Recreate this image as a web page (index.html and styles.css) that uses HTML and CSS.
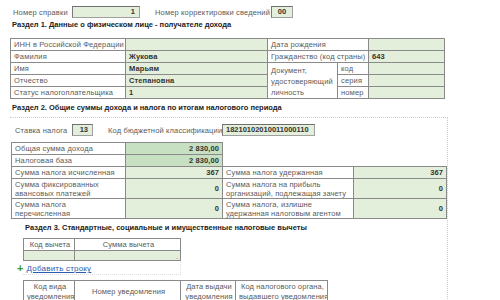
FILE: index.html
```html
<!DOCTYPE html>
<html lang="ru">
  <head>
    <meta charset="UTF-8" />
    <title>Справка 2-НДФЛ</title>
    <link rel="stylesheet" href="styles.css">
  </head>
  <body>
    <main class="form">
      <div class="head-row">
        <label class="field">
          <span class="lbl lbl-num">Номер справки</span>
          <span class="box box-num">1</span>
        </label>
        <label class="field">
          <span class="lbl lbl-corr">Номер корректировки сведений</span>
          <span class="box box-corr">00</span>
        </label>
      </div>

      <h3 class="section-title">Раздел 1. Данные о физическом лице - получателе дохода</h3>
      <table class="grid person">
        <colgroup>
          <col style="width:115px" />
          <col style="width:142px" />
          <col style="width:70px" />
          <col style="width:31px" />
          <col style="width:76px" />
        </colgroup>
        <tr>
          <td>ИНН в Российской Федерации</td>
          <td class="val"></td>
          <td colspan="2">Дата рождения</td>
          <td class="val"></td>
        </tr>
        <tr>
          <td>Фамилия</td>
          <td class="val strong">Жукова</td>
          <td colspan="2">Гражданство (код страны)</td>
          <td class="val strong">643</td>
        </tr>
        <tr>
          <td>Имя</td>
          <td class="val strong">Марьям</td>
          <td rowspan="3" class="doc">Документ,<br>удостоверяющий<br>личность</td>
          <td>код</td>
          <td class="val"></td>
        </tr>
        <tr>
          <td>Отчество</td>
          <td class="val strong">Степановна</td>
          <td>серия</td>
          <td class="val"></td>
        </tr>
        <tr>
          <td>Статус налогоплательщика</td>
          <td class="val strong">1</td>
          <td>номер</td>
          <td class="val"></td>
        </tr>
      </table>

      <h3 class="section-title">Раздел 2. Общие суммы дохода и налога по итогам налогового периода</h3>
      <section class="panel">
        <div class="rate-row">
          <label class="field">
            <span class="lbl lbl-rate">Ставка налога</span>
            <span class="box box-rate">13</span>
          </label>
          <label class="field">
            <span class="lbl lbl-kbk">Код бюджетной классификации</span>
            <span class="box box-kbk">18210102010011000110</span>
          </label>
        </div>

        <table class="grid sums">
          <colgroup>
            <col style="width:114px" />
            <col style="width:97px" />
            <col style="width:131px" />
            <col style="width:93px" />
          </colgroup>
          <tr>
            <td>Общая сумма дохода</td>
            <td class="val dark num strong">2 830,00</td>
            <td class="blank" colspan="2"></td>
          </tr>
          <tr>
            <td>Налоговая база</td>
            <td class="val dark num strong">2 830,00</td>
            <td class="blank" colspan="2"></td>
          </tr>
          <tr>
            <td>Сумма налога исчисленная</td>
            <td class="val num strong">367</td>
            <td>Сумма налога удержанная</td>
            <td class="val num strong">367</td>
          </tr>
          <tr class="tall">
            <td>Сумма фиксированных<br>авансовых платежей</td>
            <td class="val num strong">0</td>
            <td class="long">Сумма налога на прибыль<br>организаций, подлежащая зачету</td>
            <td class="val num strong">0</td>
          </tr>
          <tr class="tall">
            <td>Сумма налога<br>перечисленная</td>
            <td class="val num strong">0</td>
            <td class="long">Сумма налога, излишне<br>удержанная налоговым агентом</td>
            <td class="val num strong">0</td>
          </tr>
        </table>

        <h3 class="section-title sub">Раздел 3. Стандартные, социальные и имущественные налоговые вычеты</h3>
        <div class="deductions">
          <table class="grid list">
            <colgroup>
              <col style="width:51px" />
              <col style="width:106px" />
            </colgroup>
            <tr class="th">
              <td>Код вычета</td>
              <td>Сумма вычета</td>
            </tr>
            <tr class="row">
              <td class="val"></td>
              <td class="val num"><span class="dot">.</span></td>
            </tr>
          </table>
          <a class="add" href="#"><span class="plus">+</span><span class="link">Добавить строку</span></a>
        </div>

        <table class="grid list notices">
          <colgroup>
            <col style="width:51px" />
            <col style="width:106px" />
            <col style="width:55px" />
            <col style="width:92px" />
          </colgroup>
          <tr class="th">
            <td>Код вида<br>уведомления</td>
            <td>Номер уведомления</td>
            <td>Дата выдачи<br>уведомления</td>
            <td>Код налогового органа,<br>выдавшего уведомления</td>
          </tr>
          <tr class="row">
            <td class="val"></td>
            <td class="val"></td>
            <td class="val"></td>
            <td class="val"></td>
          </tr>
        </table>
      </section>
    </main>
  </body>
</html>
```

FILE: styles.css
```css
body {
  margin: 0;
  padding: 0;
  background-color: #fff;
  color: #5a5a5a;
  font-family: "Liberation Sans", Arial, sans-serif;
  font-size: 7.5px;
  letter-spacing: 0.15px;
}
.form {
  padding: 6px 0 0 10px;
  width: 438px;
}
.head-row,
.rate-row {
  display: flex;
  gap: 15px;
  align-items: center;
  padding-left: 3px;
}
.field {
  display: flex;
  align-items: center;
  white-space: nowrap;
}
.lbl-num {
  width: 59px;
}
.lbl-corr {
  width: 116px;
}
.lbl-rate {
  width: 57px;
}
.lbl-kbk {
  width: 114px;
}
.box {
  box-sizing: border-box;
  height: 12px;
  line-height: 10px;
  padding: 0 4px;
  border: 1px solid #a0a0a0;
  border-top-color: #6f6f6f;
  border-left-color: #7a7a7a;
  background-color: #e3eedb;
  color: #333;
  font-weight: bold;
  letter-spacing: 0;
  text-align: right;
}
.box-num {
  width: 68px;
}
.box-corr {
  width: 22px;
  text-align: center;
}
.box-rate {
  width: 21px;
}
.box-kbk {
  width: 93px;
  text-align: left;
  padding: 0 3px;
}
.section-title {
  margin: 2px 0 8px 2px;
  font-size: 7.5px;
  letter-spacing: 0;
  line-height: 10px;
  font-weight: bold;
  color: #222;
}
.person + .section-title {
  margin: 4px 0 4px 2px;
}
.section-title.sub {
  margin: 4px 0 5px 15px;
}
.grid {
  border-collapse: collapse;
  table-layout: fixed;
}
.person {
  width: 434px;
}
.sums {
  width: 435px;
  margin-left: 1px;
}
.grid td {
  border: 1px solid #8a8a8a;
  padding: 0 1px 0 3px;
  height: 11px;
  line-height: 10px;
  vertical-align: middle;
  white-space: nowrap;
  overflow: hidden;
}
.grid .long {
  letter-spacing: 0.1px;
}
.person .doc {
  line-height: 11px;
  vertical-align: top;
  padding-top: 2px;
}
.grid .val {
  background-color: #e3eedb;
}
.grid .dark {
  background-color: #c7e0c1;
}
.grid .strong {
  color: #333;
  font-weight: bold;
  letter-spacing: 0.1px;
}
.grid .num {
  text-align: right;
  padding-right: 3px;
}
.grid .blank {
  border: none;
  background: none;
}
.sums .tall td {
  height: 19px;
  line-height: 9px;
}
.panel {
  border-top: 1px dotted #ccc;
  border-right: 1px dotted #ccc;
  padding-top: 6px;
}
.rate-row {
  padding-left: 5px;
  margin-bottom: 6px;
}
.deductions {
  margin-left: 13px;
  width: 157px;
  border-right: 1px dotted #ddd;
  border-bottom: 1px dotted #ddd;
}
.list {
  width: 157px;
}
.list td {
  text-align: center;
  letter-spacing: 0.1px;
}
.list .row td {
  height: 9px;
}
.list .num {
  text-align: right;
  vertical-align: bottom;
  padding-right: 2px;
}
.dot {
  display: block;
  font-size: 7px;
  line-height: 6px;
}
.add {
  display: flex;
  align-items: center;
  gap: 3px;
  height: 11px;
  margin: 2px 0 0 -6px;
  text-decoration: none;
}
.plus {
  color: #3a9a2a;
  font-weight: bold;
  font-size: 11px;
  line-height: 11px;
}
.link {
  color: #2a5db0;
  text-decoration: underline;
  font-size: 8px;
  letter-spacing: 0.2px;
  line-height: 11px;
}
.notices {
  width: 304px;
  margin: 5px 0 0 13px;
}
.notices .th td {
  height: 21px;
}
```
